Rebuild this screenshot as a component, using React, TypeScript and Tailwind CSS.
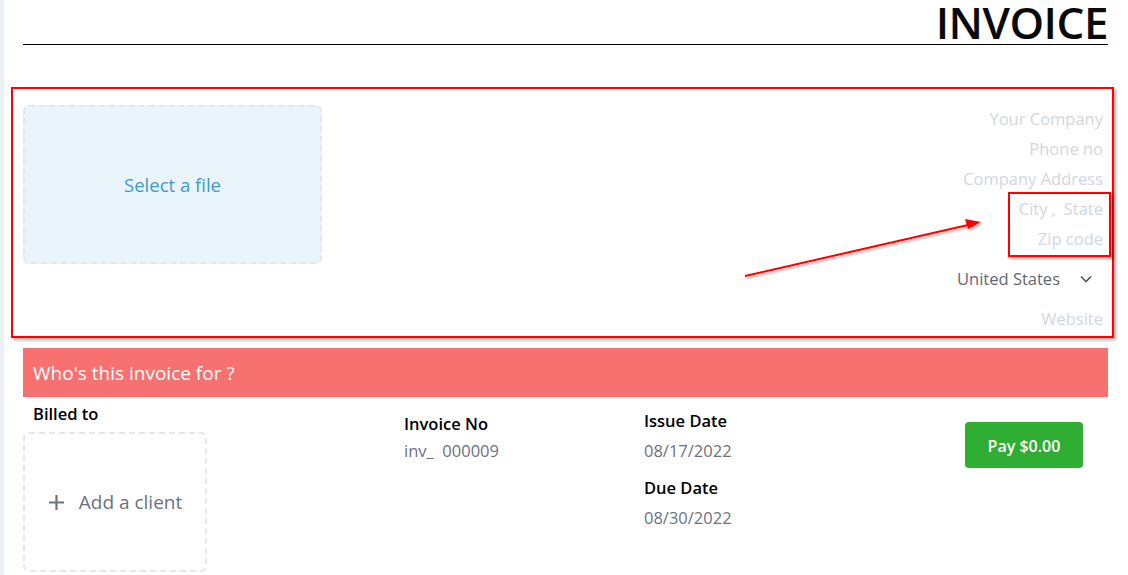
import React from 'react';

const font = { fontFamily: '"Open Sans", "Noto Sans", sans-serif' };

const companyFields = ['Your Company', 'Phone no', 'Company Address'];

export default function App() {
  return (
    <div className="relative flex h-[575px] w-[1128px] overflow-hidden bg-white" style={font}>
      <div className="w-[4px] shrink-0 bg-[#eaf1f5]" />
      <div className="flex-1 pl-[19px] pr-[20px]">
        {/* header */}
        <div className="h-[45px] border-b border-black text-right">
          <h1 className="text-[44px] font-semibold leading-[44px] tracking-[-0.5px] text-[#0a0a0a]">INVOICE</h1>
        </div>

        {/* company section */}
        <div className="mt-[60px] flex justify-between">
          <div className="flex h-[159px] w-[299px] items-center justify-center rounded-md border-2 border-dashed border-[#e3e6ea] bg-[#eaf5fb]">
            <span className="text-[18.5px] text-[#3d9ad1]">Select a file</span>
          </div>
          <div className="-mt-[1px] flex flex-col items-end pr-[5px] text-[16.5px] text-[#d2d6dc]">
            {companyFields.map((f) => (
              <div key={f} className="flex h-[30px] items-center">{f}</div>
            ))}
            <div className="flex h-[30px] items-center">
              <span>City</span>
              <span className="ml-[4px] mr-[8px]">,</span>
              <span>State</span>
            </div>
            <div className="flex h-[30px] items-center">Zip code</div>
            <div className="flex h-[50px] items-center text-[#5f6674]">
              <span>United States</span>
              <svg className="ml-[20px] mr-[11px]" width="12" height="8" viewBox="0 0 12 8" fill="none">
                <path d="M1 1.5l5 5 5-5" stroke="#4b5563" strokeWidth="1.6" />
              </svg>
            </div>
            <div className="flex h-[30px] items-center">Website</div>
          </div>
        </div>

        {/* who is this for */}
        <div className="mt-[14px] flex h-[49px] items-center bg-[#f87171] px-[10px] pt-[2px] text-[19px] text-white">
          Who's this invoice for ?
        </div>

        <div className="flex">
          <div className="w-[381px]">
            <div className="flex h-[34px] items-center px-[10px] pt-[1px] text-[16.5px] font-semibold text-black">Billed to</div>
            <div className="mt-[1px] flex h-[140px] w-[184px] items-center justify-center rounded-md border-2 border-dashed border-[#e3e6ea] text-[19px] text-[#6b7280]">
              <svg className="mr-[14px]" width="17" height="17" viewBox="0 0 17 17" fill="none">
                <path d="M8.5 1v15M1 8.5h15" stroke="#6b7280" strokeWidth="2.2" />
              </svg>
              <span className="pt-[1px]">Add a client</span>
            </div>
          </div>
          <div className="w-[240px] pt-[16px]">
            <div className="text-[16.5px] font-semibold leading-[22px] text-black">Invoice No</div>
            <div className="mt-[5px] text-[16.5px] leading-[22px] text-[#6b7280]">inv_&nbsp; 000009</div>
          </div>
          <div className="flex-1 pt-[13px]">
            <div className="text-[16.5px] font-semibold leading-[22px] text-black">Issue Date</div>
            <div className="mt-[8px] text-[16.5px] leading-[22px] text-[#6b7280]">08/17/2022</div>
            <div className="mt-[15px] text-[16.5px] font-semibold leading-[22px] text-black">Due Date</div>
            <div className="mt-[8px] text-[16.5px] leading-[22px] text-[#6b7280]">08/30/2022</div>
          </div>
          <div className="pr-[25px] pt-[25px]">
            <button className="h-[46px] w-[118px] rounded-[4px] bg-[#2fae33] pt-[1px] text-[16px] font-semibold text-white">Pay $0.00</button>
          </div>
        </div>
      </div>

      {/* annotations */}
      <div className="pointer-events-none absolute left-[11px] top-[87px] h-[251px] w-[1103px] border-2 border-[#ff0000] shadow-[2px_2px_3px_rgba(0,0,0,0.35)]" />
      <div className="pointer-events-none absolute left-[1008px] top-[192px] h-[65px] w-[103px] border-2 border-[#ff0000] shadow-[2px_2px_3px_rgba(0,0,0,0.35)]" />
      <svg className="pointer-events-none absolute left-0 top-0" width="1128" height="575">
        <defs>
          <filter id="sh" x="-10%" y="-10%" width="120%" height="140%">
            <feDropShadow dx="1.5" dy="2" stdDeviation="1" floodColor="#000" floodOpacity="0.3" />
          </filter>
        </defs>
        <g filter="url(#sh)">
          <line x1="745" y1="276" x2="968" y2="225" stroke="#ff0000" strokeWidth="2" />
          <polygon points="981,222 965,219 968,229" fill="#ff0000" />
        </g>
      </svg>
    </div>
  );
}
